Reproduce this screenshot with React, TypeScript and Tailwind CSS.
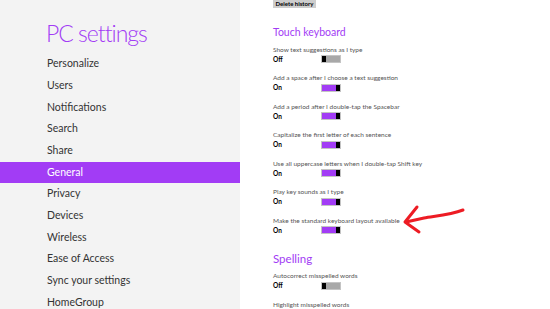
import React from 'react';

const navItems = [
  'Personalize',
  'Users',
  'Notifications',
  'Search',
  'Share',
  'General',
  'Privacy',
  'Devices',
  'Wireless',
  'Ease of Access',
  'Sync your settings',
  'HomeGroup',
];

const touchOptions: { label: string; on: boolean }[] = [
  { label: 'Show text suggestions as I type', on: false },
  { label: 'Add a space after I choose a text suggestion', on: true },
  { label: 'Add a period after I double-tap the Spacebar', on: true },
  { label: 'Capitalize the first letter of each sentence', on: true },
  { label: 'Use all uppercase letters when I double-tap Shift key', on: true },
  { label: 'Play key sounds as I type', on: true },
  { label: 'Make the standard keyboard layout available', on: true },
];

const Toggle: React.FC<{ on: boolean }> = ({ on }) => (
  <div className="flex h-[8px] w-[20px] border border-[#c4c4c4] bg-white">
    {on ? (
      <>
        <div className="flex-1 bg-[#a23cf5]" />
        <div className="w-[4px] bg-black" />
      </>
    ) : (
      <>
        <div className="w-[4px] bg-black" />
        <div className="flex-1 bg-[#a8a8a8]" />
      </>
    )}
  </div>
);

const Option: React.FC<{ label: string; on: boolean }> = ({ label, on }) => (
  <div className="flex h-[28.5px] flex-col">
    <div className="h-[10px] text-[6.5px] leading-[10px] text-[#555]">{label}</div>
    <div className="flex h-[9px] items-center">
      <span className="w-[48px] text-[6.5px] font-bold leading-[9px] text-black">{on ? 'On' : 'Off'}</span>
      <Toggle on={on} />
    </div>
  </div>
);

export default function App() {
  return (
    <div className="relative flex h-[309px] w-[550px] overflow-hidden bg-white" style={{ fontFamily: 'Lato, "Open Sans", sans-serif' }}>
      <div className="w-[240px] shrink-0 bg-[#f3f3f3]">
        <h1 className="mt-[18px] h-[35.3px] pl-[46px] text-[23px] font-light leading-[30px] tracking-[-1px] text-[#a23cf5]">
          PC settings
        </h1>
        <ul>
          {navItems.map((item) => (
            <li
              key={item}
              className={`flex h-[21.7px] items-center pl-[47px] text-[10.5px] ${
                item === 'General' ? 'bg-[#a23cf5] text-white' : 'text-[#333]'
              }`}
            >
              {item}
            </li>
          ))}
        </ul>
      </div>

      <div className="flex-1 pl-[33px]">
        <div className="flex h-[8px] w-[43px] items-center justify-center bg-[#cdcdcd] text-[6px] font-bold leading-[8px] text-black">
          Delete history
        </div>
        <h2 className="mt-[17px] h-[19.5px] text-[10.5px] leading-[14px] text-[#a23cf5]">Touch keyboard</h2>
        {touchOptions.map((o) => (
          <Option key={o.label} label={o.label} on={o.on} />
        ))}
        <h2 className="mt-[7px] h-[20px] text-[11.5px] leading-[16px] text-[#a23cf5]">Spelling</h2>
        <Option label="Autocorrect misspelled words" on={false} />
        <Option label="Highlight misspelled words" on={true} />
      </div>

      <svg className="absolute left-[400px] top-[200px]" width="70" height="36" viewBox="0 0 70 36">
        <path
          d="M63 10 C50 15 35 16 24 18 L6 22"
          fill="none"
          stroke="#ed1c24"
          strokeWidth="3"
          strokeLinecap="round"
        />
        <path d="M17 7 L5 22 L19 32" fill="none" stroke="#ed1c24" strokeWidth="3" strokeLinecap="round" strokeLinejoin="round" />
      </svg>
    </div>
  );
}
